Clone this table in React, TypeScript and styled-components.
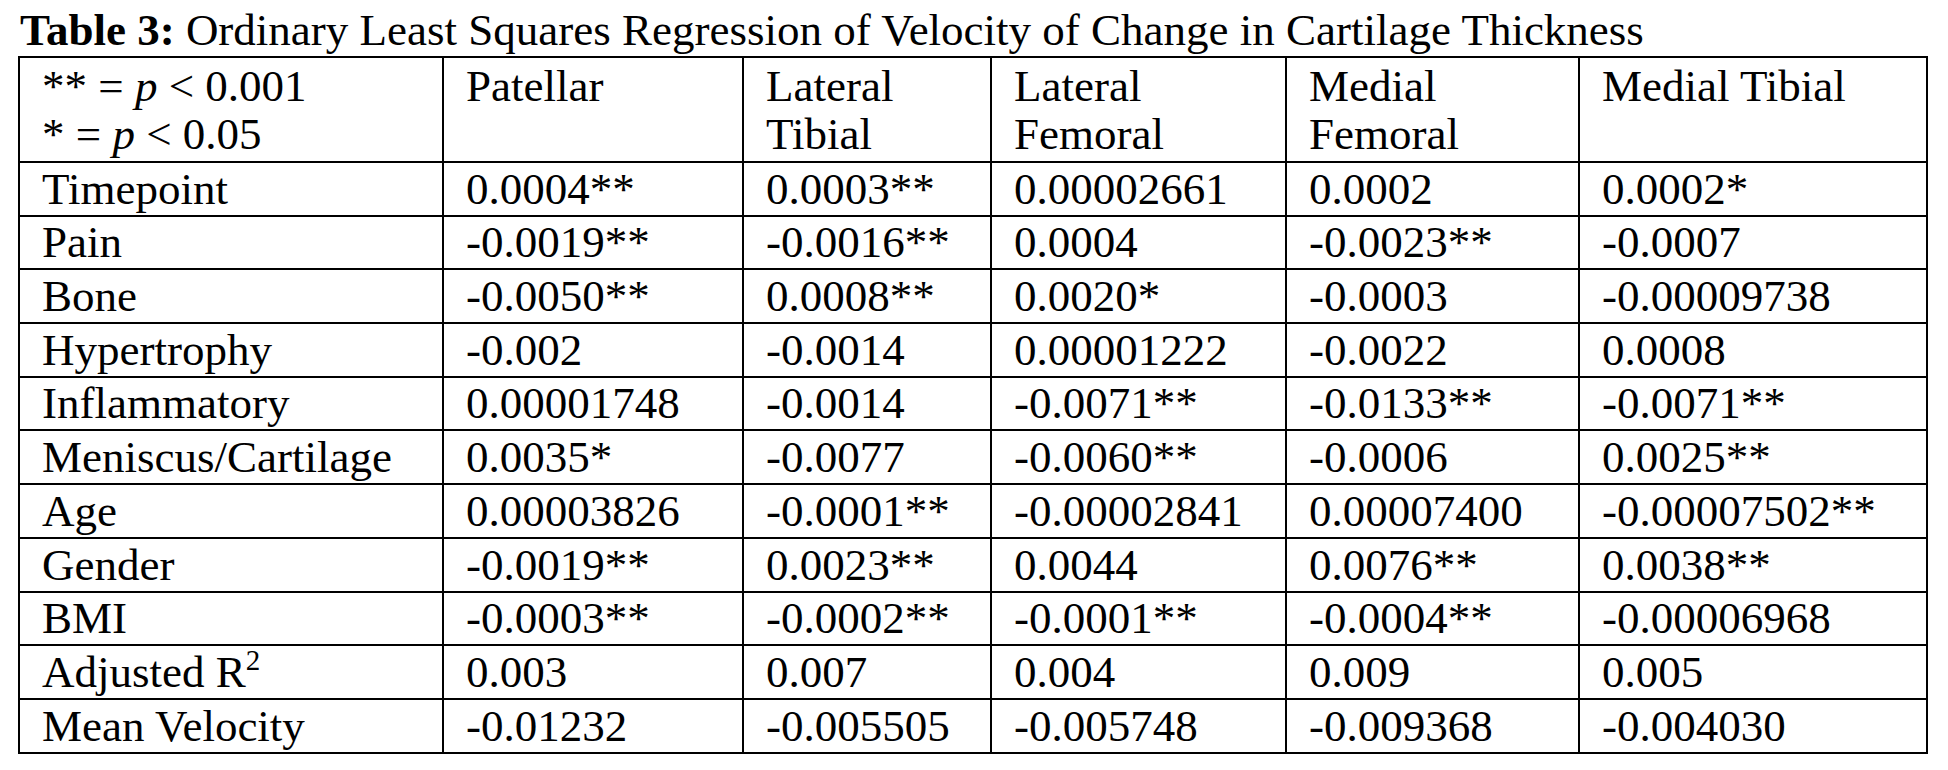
import React from "react";
import styled, { createGlobalStyle } from "styled-components";

const GlobalStyle = createGlobalStyle`
  html, body {
    margin: 0;
    padding: 0;
    background: #ffffff;
  }
  body {
    font-family: "Liberation Serif", "Times New Roman", Times, serif;
    color: #000000;
  }
`;

const Page = styled.div`
  padding: 6px 0 0 18px;
`;

const Caption = styled.div`
  font-size: 45px;
  line-height: 48px;
  padding-left: 2px;
  margin-bottom: 2px;
  white-space: nowrap;
`;

const CaptionLabel = styled.b`
  font-weight: 700;
`;

const Table = styled.table`
  border-collapse: collapse;
  table-layout: fixed;
  width: 1908px;
  font-size: 45px;
  line-height: 48px;
`;

const HeadCell = styled.th`
  border: 2px solid #000;
  padding: 3.5px 8px 3.5px 22px;
  text-align: left;
  vertical-align: top;
  font-weight: 400;
  white-space: nowrap;
`;

const Cell = styled.td`
  border: 2px solid #000;
  padding: 1.7px 8px 2px 22px;
  text-align: left;
  vertical-align: top;
  white-space: nowrap;
`;

const Italic = styled.i`
  font-style: italic;
`;

const Sup = styled.sup`
  font-size: 29px;
  line-height: 0;
  vertical-align: 17px;
`;

const widths = [424, 300, 248, 295, 293, 348];

const rows: [React.ReactNode, ...string[]][] = [
  ["Timepoint", "0.0004**", "0.0003**", "0.00002661", "0.0002", "0.0002*"],
  ["Pain", "-0.0019**", "-0.0016**", "0.0004", "-0.0023**", "-0.0007"],
  ["Bone", "-0.0050**", "0.0008**", "0.0020*", "-0.0003", "-0.00009738"],
  ["Hypertrophy", "-0.002", "-0.0014", "0.00001222", "-0.0022", "0.0008"],
  ["Inflammatory", "0.00001748", "-0.0014", "-0.0071**", "-0.0133**", "-0.0071**"],
  ["Meniscus/Cartilage", "0.0035*", "-0.0077", "-0.0060**", "-0.0006", "0.0025**"],
  ["Age", "0.00003826", "-0.0001**", "-0.00002841", "0.00007400", "-0.00007502**"],
  ["Gender", "-0.0019**", "0.0023**", "0.0044", "0.0076**", "0.0038**"],
  ["BMI", "-0.0003**", "-0.0002**", "-0.0001**", "-0.0004**", "-0.00006968"],
  [
    <>
      Adjusted R<Sup>2</Sup>
    </>,
    "0.003",
    "0.007",
    "0.004",
    "0.009",
    "0.005",
  ],
  ["Mean Velocity", "-0.01232", "-0.005505", "-0.005748", "-0.009368", "-0.004030"],
];

const App: React.FC = () => {
  return (
    <Page>
      <GlobalStyle />
      <Caption>
        <CaptionLabel>Table 3:</CaptionLabel> Ordinary Least Squares Regression of
        Velocity of Change in Cartilage Thickness
      </Caption>
      <Table>
        <colgroup>
          {widths.map((w, i) => (
            <col key={i} style={{ width: w }} />
          ))}
        </colgroup>
        <thead>
          <tr>
            <HeadCell>
              ** = <Italic>p</Italic> &lt; 0.001
              <br />* = <Italic>p</Italic> &lt; 0.05
            </HeadCell>
            <HeadCell>Patellar</HeadCell>
            <HeadCell>
              Lateral
              <br />
              Tibial
            </HeadCell>
            <HeadCell>
              Lateral
              <br />
              Femoral
            </HeadCell>
            <HeadCell>
              Medial
              <br />
              Femoral
            </HeadCell>
            <HeadCell>Medial Tibial</HeadCell>
          </tr>
        </thead>
        <tbody>
          {rows.map((row, r) => (
            <tr key={r}>
              {row.map((value, c) => (
                <Cell key={c}>{value}</Cell>
              ))}
            </tr>
          ))}
        </tbody>
      </Table>
    </Page>
  );
};

export default App;
